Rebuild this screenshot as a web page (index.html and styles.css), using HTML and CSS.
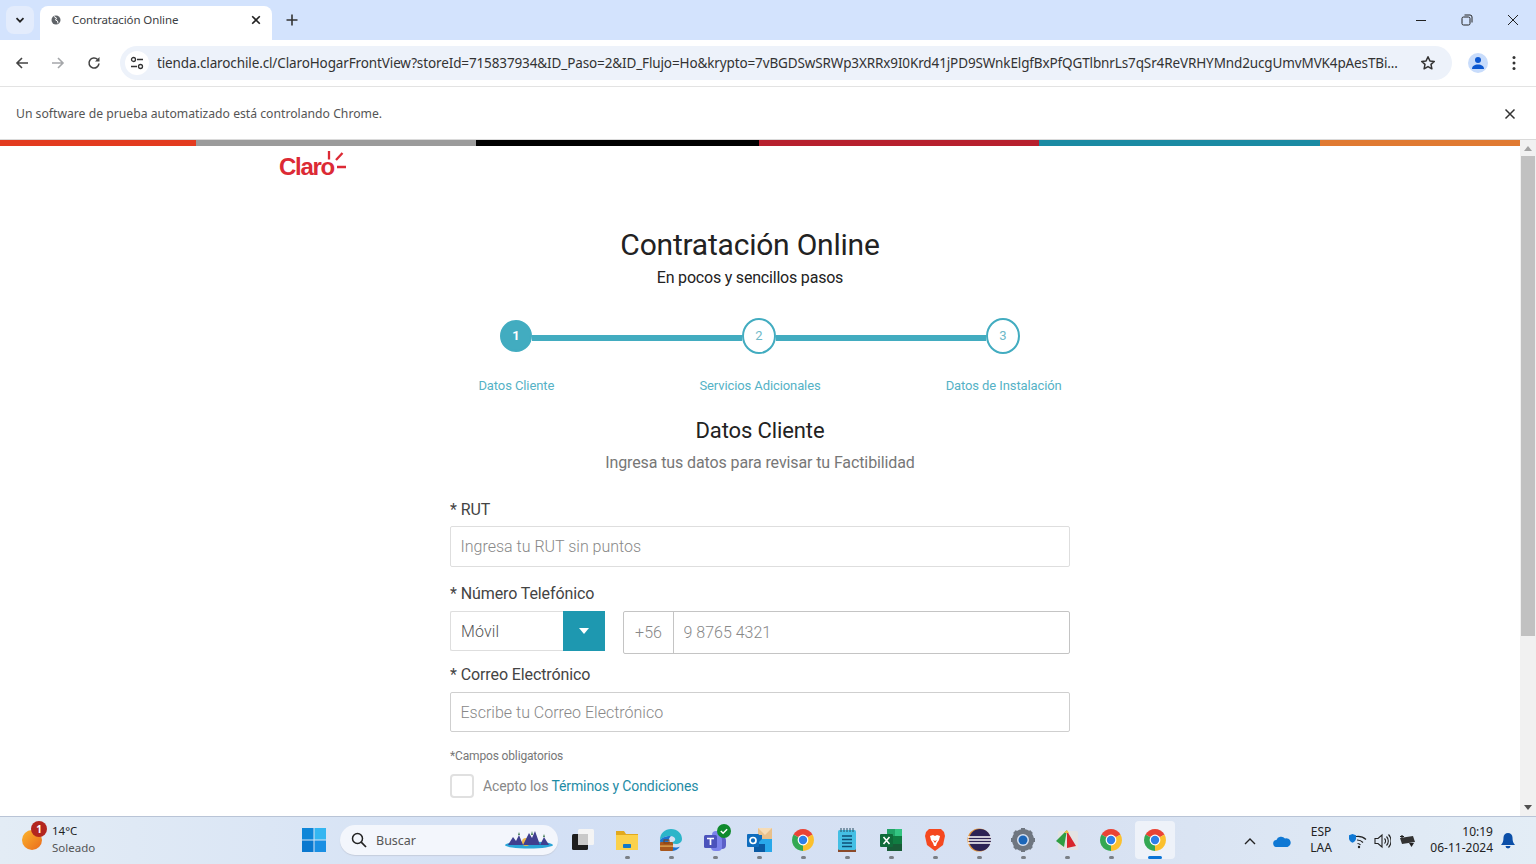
FILE: index.html
```html
<!DOCTYPE html>
<html lang="es">
<head>
<meta charset="utf-8">
<title>Contratación Online</title>
<link rel="stylesheet" href="styles.css">
</head>
<body>
<svg class="defs" width="0" height="0" aria-hidden="true">
  <symbol id="chrome" viewBox="0 0 24 24">
    <path fill="#ea4335" d="M12 12L21.5 6.5A11 11 0 0 0 2.5 6.5Z"/>
    <path fill="#fbc02d" d="M12 12L12 23A11 11 0 0 0 21.5 6.5Z"/>
    <path fill="#34a853" d="M12 12L2.5 6.5A11 11 0 0 0 12 23Z"/>
    <circle cx="12" cy="12" r="5.4" fill="#fff"/>
    <circle cx="12" cy="12" r="4.2" fill="#2f7fe8"/>
  </symbol>
</svg>

<header class="tabstrip">
  <div class="tab-search">
    <svg width="12" height="12" viewBox="0 0 12 12"><path d="M2.5 4.2L6 7.7l3.5-3.5" fill="none" stroke="#222" stroke-width="1.7"/></svg>
  </div>
  <div class="tab">
    <svg class="tab-favicon" width="10" height="10" viewBox="0 0 10 10"><circle cx="5" cy="5" r="4.5" fill="#5f6368"/><path d="M3 1.5l2.5 1.5-1 2 2 1 .5 2.5" fill="none" stroke="#fff" stroke-width="1"/></svg>
    <span class="tab-title">Contratación Online</span>
    <svg width="10" height="10" viewBox="0 0 10 10"><path d="M1.2 1.2l7.6 7.6M8.8 1.2L1.2 8.8" stroke="#222" stroke-width="1.6"/></svg>
  </div>
  <svg class="new-tab" width="12" height="12" viewBox="0 0 12 12"><path d="M6 .5v11M.5 6h11" stroke="#333" stroke-width="1.6"/></svg>
  <div class="win-controls">
    <svg width="12" height="12" viewBox="0 0 12 12"><path d="M1 6.5h10" stroke="#222" stroke-width="1"/></svg>
    <svg width="12" height="12" viewBox="0 0 12 12"><rect x="1" y="3" width="8" height="8" rx="1.5" fill="none" stroke="#222"/><path d="M3.5 1h5.5A2 2 0 0 1 11 3v5.5" fill="none" stroke="#222"/></svg>
    <svg width="12" height="12" viewBox="0 0 12 12"><path d="M1 1l10 10M11 1L1 11" stroke="#222" stroke-width="1"/></svg>
  </div>
</header>

<nav class="toolbar">
  <svg class="nav-icon" width="14" height="14" viewBox="0 0 14 14"><path d="M13 7H2M7 2L2 7l5 5" fill="none" stroke="#444" stroke-width="1.6"/></svg>
  <svg class="nav-icon" width="14" height="14" viewBox="0 0 14 14"><path d="M1 7h11M7 2l5 5-5 5" fill="none" stroke="#a5a7aa" stroke-width="1.6"/></svg>
  <svg class="nav-icon" width="14" height="14" viewBox="0 0 14 14"><path d="M12 7.5A5 5 0 1 1 10.6 3.5" fill="none" stroke="#444" stroke-width="1.6"/><path d="M12.5 1v4.5H8z" fill="#444"/></svg>
  <div class="omnibox">
    <div class="site-info">
      <svg width="14" height="14" viewBox="0 0 14 14"><circle cx="3.5" cy="3.5" r="2" fill="none" stroke="#333" stroke-width="1.3"/><path d="M7 3.5h6M1 10.5h6" stroke="#333" stroke-width="1.3"/><circle cx="10.5" cy="10.5" r="2" fill="none" stroke="#333" stroke-width="1.3"/></svg>
    </div>
    <span class="url">tienda.clarochile.cl/ClaroHogarFrontView?storeId=715837934&amp;ID_Paso=2&amp;ID_Flujo=Ho&amp;krypto=7vBGDSwSRWp3XRRx9I0Krd41jPD9SWnkElgfBxPfQGTlbnrLs7qSr4ReVRHYMnd2ucgUmvMVK4pAesTBi...</span>
    <svg class="star" width="16" height="16" viewBox="0 0 16 16"><path d="M8 1.8l1.9 4.1 4.4.5-3.3 3 .9 4.4L8 11.6l-3.9 2.2.9-4.4-3.3-3 4.4-.5z" fill="none" stroke="#333" stroke-width="1.5" stroke-linejoin="round"/></svg>
  </div>
  <div class="avatar">
    <svg width="14" height="14" viewBox="0 0 14 14"><circle cx="7" cy="4" r="3" fill="#0b57d0"/><path d="M1 13c0-3 2.5-4.5 6-4.5s6 1.5 6 4.5z" fill="#0b57d0"/></svg>
  </div>
  <svg class="kebab" width="4" height="16" viewBox="0 0 4 16"><circle cx="2" cy="2.5" r="1.5" fill="#333"/><circle cx="2" cy="8" r="1.5" fill="#333"/><circle cx="2" cy="13.5" r="1.5" fill="#333"/></svg>
</nav>

<div class="infobar">
  <span>Un software de prueba automatizado está controlando Chrome.</span>
  <svg width="12" height="12" viewBox="0 0 12 12"><path d="M1.5 1.5l9 9M10.5 1.5l-9 9" stroke="#333" stroke-width="1.5"/></svg>
</div>

<div class="viewport">
  <main class="page">
    <div class="color-bar"><i class="c1"></i><i class="c2"></i><i class="c3"></i><i class="c4"></i><i class="c5"></i><i class="c6"></i></div>
    <div class="logo-row">
      <svg class="logo" width="68" height="34" viewBox="0 0 68 34">
        <text x="0" y="25" class="logo-text">Claro</text>
        <path d="M50 1v8.5M57 10l6.5-7M58 17h9" stroke="#dc2a35" stroke-width="2.3" fill="none"/>
      </svg>
    </div>
    <section class="hero">
      <h1>Contratación Online</h1>
      <p>En pocos y sencillos pasos</p>
    </section>
    <div class="steps">
      <span class="step step-on">1</span><span class="connector"></span>
      <span class="step">2</span><span class="connector"></span>
      <span class="step">3</span>
    </div>
    <div class="step-labels">
      <span>Datos Cliente</span><span>Servicios Adicionales</span><span>Datos de Instalación</span>
    </div>
    <form class="form">
      <h2>Datos Cliente</h2>
      <p class="lead">Ingresa tus datos para revisar tu Factibilidad</p>
      <label class="label label-rut">* RUT</label>
      <input class="field field-rut" placeholder="Ingresa tu RUT sin puntos">
      <label class="label label-tel">* Número Telefónico</label>
      <div class="tel-row">
        <div class="select">
          <span class="select-value">Móvil</span>
          <span class="select-btn"><svg width="10" height="6" viewBox="0 0 10 6"><path d="M0 0h10L5 6z" fill="#fff"/></svg></span>
        </div>
        <div class="tel-group">
          <span class="prefix">+56</span>
          <input class="tel-input" placeholder="9 8765 4321">
        </div>
      </div>
      <label class="label label-mail">* Correo Electrónico</label>
      <input class="field field-mail" placeholder="Escribe tu Correo Electrónico">
      <p class="note">*Campos obligatorios</p>
      <div class="terms">
        <span class="checkbox"></span>
        <span>Acepto los <a class="terms-link">Términos y Condiciones</a></span>
      </div>
    </form>
  </main>
  <aside class="scrollbar">
    <svg width="8" height="5" viewBox="0 0 8 5"><path d="M0 5L4 0l4 5z" fill="#a3a3a3"/></svg>
    <div class="thumb"></div>
    <svg class="arrow-down" width="8" height="5" viewBox="0 0 8 5"><path d="M0 0l4 5 4-5z" fill="#505050"/></svg>
  </aside>
</div>

<footer class="taskbar">
  <div class="weather">
    <div class="sun"><span class="sun-badge">1</span></div>
    <div class="weather-text"><span>14°C</span><span class="muted">Soleado</span></div>
  </div>
  <div class="slot">
    <svg class="icon" viewBox="0 0 24 24"><path fill="#0f86d8" d="M0 0h11.5v11.5H0z"/><path fill="#34b6f1" d="M12.5 0H24v11.5H12.5z"/><path fill="#0a78cf" d="M0 12.5h11.5V24H0z"/><path fill="#1a8fe3" d="M12.5 12.5H24V24H12.5z"/></svg>
  </div>
  <div class="search">
    <svg width="16" height="16" viewBox="0 0 16 16"><circle cx="6.5" cy="6.5" r="5" fill="none" stroke="#222" stroke-width="1.5"/><path d="M10.2 10.2L15 15" stroke="#222" stroke-width="1.7"/></svg>
    <span class="search-text">Buscar</span>
    <svg class="search-art" width="48" height="22" viewBox="0 0 48 22">
      <ellipse cx="24" cy="16" rx="24" ry="3.5" fill="#2aa5d8"/>
      <circle cx="21" cy="13" r="4" fill="#f0b84a"/>
      <path d="M3 16l5-8 3 4 3-6 4 10zM18 16l6-12 3 5 3-7 5 14zM35 16l4-8 5 8z" fill="#3f3f8f"/>
      <path d="M13 6l1-3 1 3zM26 6l1-4 1 4zM38 8l1-3 1 3z" fill="#3d7a4e"/>
    </svg>
  </div>
  <div class="slot">
    <svg class="icon" viewBox="0 0 24 24"><rect x="1" y="6" width="16" height="16" rx="1.5" fill="#1d1d1d"/><rect x="7" y="1" width="16" height="16" rx="1.5" fill="#f4f4f4"/><rect x="7" y="6" width="10" height="11" fill="#c9c9c9"/></svg>
  </div>
  <div class="slot">
    <svg class="icon" viewBox="0 0 24 24"><path fill="#e2a91d" d="M1 3h8l2 3h12v3H1z"/><path fill="#fbd14b" d="M1 7h22v15H1z"/><rect x="8" y="16" width="8" height="4" rx=".8" fill="#0f78c9"/></svg>
    <span class="dot"></span>
  </div>
  <div class="slot">
    <svg class="icon" viewBox="0 0 24 24"><path fill="#2cb5c9" d="M1 12C1 5 6 1 12 1c6.5 0 11 4.5 11 10 0 3.5-3 5-6 5-3 0-4-1-4.5-2 5 .5 5.5-6-1.5-6C6 8 3 10 1 12z"/><path fill="#1b73d1" d="M1 12c0 7 5 11 11 11 4 0 7-1.5 9-4.5-3 1.5-9 1.5-11-2C8.5 13 10 10 12 8 6 8 3 10 1 12z"/><rect x="1" y="14" width="13" height="9" rx="1.2" fill="#a8571d"/><rect x="5" y="12" width="5" height="3" fill="none" stroke="#7c3f14"/><rect x="1" y="17.5" width="13" height="1.2" fill="#e8b15a"/></svg>
    <span class="dot"></span>
  </div>
  <div class="slot">
    <svg class="icon" viewBox="0 0 24 24"><circle cx="19" cy="11" r="3.5" fill="#7b83eb"/><rect x="14" y="9" width="9" height="12" rx="4" fill="#5b5fc7"/><circle cx="13" cy="7" r="4" fill="#7b83eb"/><rect x="8" y="8" width="11" height="15" rx="4" fill="#7b83eb"/><rect x="1" y="7" width="13" height="13" rx="1.5" fill="#4b53bc"/><path d="M4 10.5h7M7.5 10.5V17" stroke="#fff" stroke-width="1.7"/><circle cx="21" cy="3" r="7" fill="#0f8a2d"/><path d="M17.8 3l2.3 2.3 4-4" fill="none" stroke="#fff" stroke-width="1.5"/></svg>
    <span class="dot"></span>
  </div>
  <div class="slot">
    <svg class="icon" viewBox="0 0 24 24"><path fill="#e9c08a" d="M11 0h14v11H11z"/><path fill="#f6dcb6" d="M11 0l7 7 7-7z"/><path fill="#0f6cbd" d="M7 7h8v8H7z"/><path fill="#28a8ea" d="M15 11h10v13H12l-5-5z"/><path fill="#0a5aa3" d="M7 16h11v8H7z"/><rect x="0" y="6" width="12" height="13" rx="1" fill="#0f6cbd"/><circle cx="6" cy="12.5" r="3" fill="none" stroke="#fff" stroke-width="1.7"/></svg>
    <span class="dot"></span>
  </div>
  <div class="slot"><svg class="icon"><use href="#chrome"/></svg><span class="dot"></span></div>
  <div class="slot">
    <svg class="icon" viewBox="0 0 24 24"><path fill="#8a4a2a" d="M3 21h18v3H3z"/><rect x="3" y="2" width="18" height="20" rx="1.5" fill="#44bfe4"/><path d="M6 0v4M9 0v4M12 0v4M15 0v4M18 0v4" stroke="#264f63" stroke-width="1"/><path d="M7 8h10M7 11.5h10M7 15h10M7 18.5h10" stroke="#0d4f75" stroke-width="1.4"/></svg>
    <span class="dot"></span>
  </div>
  <div class="slot">
    <svg class="icon" viewBox="0 0 24 24"><path fill="#21a366" d="M8 1h15v7H8z"/><path fill="#107c41" d="M8 8h15v8H8z"/><path fill="#33c481" d="M16 1h7v7h-7z"/><path fill="#185c37" d="M8 16h15v7H8z"/><rect x="1" y="6" width="13" height="13" rx="1" fill="#0f6b3a"/><path d="M4.5 9l6 7M10.5 9l-6 7" stroke="#fff" stroke-width="1.6"/></svg>
    <span class="dot"></span>
  </div>
  <div class="slot">
    <svg class="icon" viewBox="0 0 24 24"><path fill="#f5481f" d="M6 1h12l3 3 1 4-2 9-8 6-8-6-2-9 1-4z"/><path fill="#fff" d="M7 8l3-1 2 1 2-1 3 1-1 4-2 3-1 3h-2l-1-3-2-3z"/><path fill="#f5481f" d="M10 12l2 1 2-1-2 3z"/></svg>
    <span class="dot"></span>
  </div>
  <div class="slot">
    <svg class="icon" viewBox="0 0 24 24"><circle cx="12" cy="12" r="11.5" fill="#e0913a"/><circle cx="13" cy="12" r="11" fill="#2c2255"/><path d="M1 9h23M1 12h23M1 15h23" stroke="#fff" stroke-width="1.3"/></svg>
    <span class="dot"></span>
  </div>
  <div class="slot">
    <svg class="icon" viewBox="0 0 24 24"><circle cx="12" cy="12" r="8.5" fill="none" stroke="#6f7680" stroke-width="5"/><path d="M12 0v5M12 19v5M0 12h5M19 12h5M3.5 3.5L7 7M17 17l3.5 3.5M20.5 3.5L17 7M7 17l-3.500 3.500" stroke="#6f7680" stroke-width="4"/><circle cx="12" cy="12" r="4.5" fill="#1c66b8"/></svg>
    <span class="dot"></span>
  </div>
  <div class="slot">
    <svg class="icon" viewBox="0 0 24 24"><rect x="3" y="3" width="20" height="19" rx="1.5" fill="#e3e3e3"/><path fill="#d8262c" d="M12 3l9 15-9 2z"/><path fill="#2f9e41" d="M12 2L1 13l8 6z"/><path fill="#f0c244" d="M9 5l3-3 2 3z"/></svg>
    <span class="dot"></span>
  </div>
  <div class="slot"><svg class="icon"><use href="#chrome"/></svg><span class="dot"></span></div>
  <div class="slot slot-active"><svg class="icon"><use href="#chrome"/></svg><span class="dot dot-active"></span></div>

  <div class="tray">
    <svg class="tray-caret" width="12" height="8" viewBox="0 0 12 8"><path d="M1 7l5-5 5 5" fill="none" stroke="#222" stroke-width="1.4"/></svg>
    <svg class="tray-cloud" width="18" height="12" viewBox="0 0 18 12"><path fill="#0f78d4" d="M4 12a3.5 3.5 0 0 1-.6-7A5 5 0 0 1 12 3.5 4.2 4.2 0 0 1 14.5 12z"/></svg>
    <div class="lang"><span>ESP</span><span>LAA</span></div>
    <svg class="tray-wifi" width="18" height="16" viewBox="0 0 18 16"><path d="M7 3.5a12 12 0 0 1 10 3M8 7a8 8 0 0 1 6 2.5M8.5 10.5a4 4 0 0 1 3 1.5" fill="none" stroke="#222" stroke-width="1.2"/><circle cx="10" cy="14" r="1.2" fill="#222"/><path d="M3.5 1L7 2.2v3c0 2-1.5 3.5-3.5 4.5C1.5 8.7 0 7.2 0 5.2v-3z" fill="#0f78d4"/></svg>
    <svg class="tray-vol" width="17" height="16" viewBox="0 0 17 16"><path d="M1 5.5h3L8 2v12l-4-3.5H1z" fill="none" stroke="#222" stroke-width="1.1"/><path d="M10.5 5.5a3.5 3.500 0 0 1 0 5M12.5 3.5a6.5 6.5 0 0 1 0 9M14.5 1.5a9.5 9.5 0 0 1 0 13" fill="none" stroke="#222" stroke-width="1.1"/></svg>
    <svg class="tray-batt" width="17" height="14" viewBox="0 0 17 14"><path d="M1 4l13-2 2 6-13 2z" fill="#333"/><path d="M3 1v3M1 2.5h4" stroke="#222" stroke-width="1.2"/><path d="M10 9h5l-2.5 4z" fill="#222"/></svg>
    <div class="clock"><span>10:19</span><span>06-11-2024</span></div>
    <svg class="tray-bell" width="14" height="16" viewBox="0 0 14 16"><path fill="#0b4fa8" d="M7 0a4.5 4.5 0 0 1 4.5 4.5c0 4 .8 5.5 2.5 7.5H0c1.700-2 2.500-3.500 2.500-7.500A4.500 4.500 0 0 1 7 0z"/><path fill="#0b4fa8" d="M4.5 13h5a2.500 2.500 0 0 1-5 0z"/></svg>
  </div>
</footer>
</body>
</html>
```

FILE: styles.css
```css
* { box-sizing: border-box; }
html, body { margin: 0; height: 864px; overflow: hidden; }
body { width: 1536px; font-family: Roboto, "Liberation Sans", sans-serif; background: #fff; }
.defs { position: absolute; }

/* browser chrome */
.tabstrip { height: 40px; background: #d3e3fd; display: flex; align-items: flex-end; font-family: "Noto Sans", "Open Sans", sans-serif; }
.tab-search { width: 28px; height: 28px; margin: 0 6px 6px; background: #e3ecfc; border-radius: 8px; display: flex; align-items: center; justify-content: center; }
.tab { width: 232px; height: 34px; background: #fff; border-radius: 8px 8px 0 0; display: flex; align-items: center; padding: 0 11px 6px; }
.tab-favicon { margin-right: 11px; }
.tab-title { flex: 1; font-size: 11.5px; letter-spacing: -.1px; color: #3c4043; line-height: 16px; }
.new-tab { margin: 0 0 14px 14px; }
.win-controls { margin-left: auto; display: flex; gap: 34px; padding: 0 17px 14px 0; }
.toolbar { height: 47px; background: #fff; border-radius: 8px 8px 0 0; border-bottom: 1px solid #e3e3e3; display: flex; align-items: center; padding: 0 0 1px 15px; }
.nav-icon { margin-right: 22px; }
.omnibox { width: 1332px; height: 34px; margin-left: -3px; background: #edf2fa; border-radius: 17px; display: flex; align-items: center; padding-left: 5px; }
.site-info { width: 24px; height: 24px; background: #fff; border-radius: 50%; display: flex; align-items: center; justify-content: center; }
.url { font-family: "Noto Sans", sans-serif; font-size: 13.5px; color: #333; margin-left: 8px; white-space: nowrap; width: 1241px; line-height: 20px; letter-spacing: -.122px; padding-top: 1px; }
.star { margin-left: 22px; }
.avatar { width: 20px; height: 20px; border-radius: 50%; background: #c8dcfb; margin-left: 16px; display: flex; align-items: center; justify-content: center; }
.kebab { margin-left: 24px; }
.infobar { height: 53px; background: #fff; border-bottom: 1px solid #dadada; display: flex; align-items: center; justify-content: space-between; padding: 1px 20px 0 16px; font-family: "Noto Sans", sans-serif; font-size: 12.2px; color: #555; }

/* viewport */
.viewport { height: 676px; display: flex; }
.page { width: 1520px; height: 676px; overflow: hidden; }
.color-bar { height: 6px; display: grid; grid-template-columns: 196fr 280fr 283fr 280fr 281fr 200fr; }
.c1 { background: #e33b1f; } .c2 { background: #9b9b9b; } .c3 { background: #000; }
.c4 { background: #b7202e; } .c5 { background: #1a8aa3; } .c6 { background: #e07a32; }
.logo-row { height: 38px; padding: 4px 0 0 279px; }
.logo { display: block; }
.logo-text { font-family: "Liberation Sans", sans-serif; font-weight: 700; font-size: 24px; fill: #dc2a35; letter-spacing: -1.3px; }
.hero { text-align: center; padding-right: 20px; }
.hero h1 { margin: 41px 0 0; font-size: 30px; line-height: 40px; font-weight: 400; color: #222; letter-spacing: -.22px; }
.hero p { margin: 1px 0 0; font-size: 16px; line-height: 24px; color: #222; letter-spacing: -.2px; }
.steps { margin-top: 28px; height: 36px; display: flex; justify-content: center; align-items: center; }
.step { width: 34px; height: 36px; border-radius: 50%; border: 2px solid #42acc0; background: #fff; color: #6fb9c8; display: flex; align-items: center; justify-content: center; font-size: 13px; padding-bottom: 2px; }
.step-on { width: 32px; height: 32px; background: #42acc0; color: #fff; font-weight: 700; }
.connector { width: 210px; height: 6px; margin-top: 3px; background: #42acc0; }
.step-labels { margin: 23px auto 0; width: 731px; display: grid; grid-template-columns: repeat(3, 1fr); text-align: center; font-size: 13px; line-height: 18px; color: #55b2c6; letter-spacing: -.1px; }
.form { width: 620px; margin: 0 auto; }
.form h2 { margin: 21px 0 0; text-align: center; font-size: 22px; line-height: 30px; font-weight: 400; color: #222; letter-spacing: -.12px; }
.lead { margin: 6px 0 0; text-align: center; font-size: 16px; line-height: 22px; color: #777; letter-spacing: -.11px; }
.label { display: block; font-size: 16px; line-height: 20px; color: #444; letter-spacing: -.1px; }
.label-rut { margin-top: 26px; }
.label-tel { margin-top: 17px; }
.label-mail { margin-top: 11px; }
.field { display: block; width: 620px; border: 1px solid #dedede; border-radius: 2px; padding: 0 10px 0 9.5px; font: 300 16px/20px Roboto, sans-serif; color: #444; outline: 0; background: #fff; margin-top: 6px; }
.field::placeholder, .tel-input::placeholder { color: #888; opacity: 1; }
.field-rut { height: 41px; }
.field-mail { height: 40px; margin-top: 7px; border-color: #cfcfcf; }
.tel-row { display: flex; gap: 18px; margin-top: 7px; height: 43px; align-items: flex-start; }
.select { width: 155px; height: 40px; display: flex; border: 1px solid #dedede; border-right: 0; border-radius: 2px; }
.select-value { flex: 1; padding-left: 10px; font-size: 16px; font-weight: 300; line-height: 39px; color: #555; letter-spacing: .1px; }
.select-btn { width: 42px; margin: -1px 0; background: #1e98b0; display: flex; align-items: center; justify-content: center; }
.tel-group { flex: 1; height: 43px; border: 1px solid #c4c4c4; border-radius: 2px; display: flex; }
.prefix { width: 50px; border-right: 1px solid #c4c4c4; text-align: center; font-size: 16px; font-weight: 300; line-height: 41px; color: #888; }
.tel-input { flex: 1; min-width: 0; border: 0; outline: 0; padding: 0 10px 0 9.5px; font: 300 16px/20px Roboto, sans-serif; background: transparent; }
.note { margin: 16px 0 0; font-size: 12px; line-height: 16px; color: #777; letter-spacing: -.15px; }
.terms { margin-top: 10px; display: flex; align-items: center; gap: 9px; font-size: 14px; line-height: 24px; color: #888; letter-spacing: -.1px; }
.checkbox { width: 24px; height: 24px; border: 2px solid #e0e0e0; border-radius: 4px; }
.terms-link { color: #1e8ca5; }
.scrollbar { width: 16px; background: #f1f1f1; display: flex; flex-direction: column; align-items: center; padding-top: 6px; }
.thumb { width: 14px; height: 480px; margin-top: 5px; background: #c1c1c1; }
.arrow-down { margin-top: auto; margin-bottom: 6px; }

/* taskbar */
.taskbar { height: 48px; border-top: 1px solid #b9c4d6; background: linear-gradient(90deg, #e3ecf5 0%, #d3e0f5 35%, #d7e1f2 70%, #e3edf6 100%); display: flex; align-items: flex-start; padding-top: 4px; font-family: "Noto Sans", sans-serif; color: #222; }
.weather { width: 292px; display: flex; padding: 1px 0 0 22px; }
.sun { width: 20px; height: 20px; margin-top: 8px; border-radius: 50%; background: linear-gradient(135deg, #fbb52c, #ea6a1c); position: relative; }
.sun-badge { position: absolute; left: 9px; top: -9px; width: 16px; height: 16px; border-radius: 50%; background: #b3261e; color: #fff; font-size: 10px; line-height: 16px; text-align: center; font-weight: 700; }
.weather-text { display: flex; flex-direction: column; margin-left: 10px; font-size: 11.5px; line-height: 17px; }
.muted { color: #555; }
.slot { width: 40px; height: 38px; margin: 0 2px; border-radius: 4px; padding-top: 7px; display: flex; flex-direction: column; align-items: center; }
.slot-active { background: #eef2f9; }
.icon { width: 24px; height: 24px; overflow: visible; display: block; flex: none; }
.dot { width: 5px; height: 3px; margin-top: 4px; border-radius: 2px; background: #7a7f86; }
.dot-active { width: 14px; background: #0a74d6; }
.search { width: 218px; height: 30px; margin: 4px 3px 0 4px; background: #f3f6fc; border-radius: 15px; display: flex; align-items: center; padding: 0 5px 0 11px; box-shadow: 0 1px 1px #c6cedd; }
.search-text { margin-left: 9px; font-size: 12.5px; color: #555; flex: 1; }
.tray { margin-left: auto; display: flex; align-items: center; height: 39px; padding-right: 21px; }
.tray-cloud { margin-left: 17px; }
.lang { width: 34px; margin-left: 13px; margin-top: -2px; display: flex; flex-direction: column; align-items: center; font-size: 12px; line-height: 16px; }
.tray-wifi { margin-left: 11px; }
.tray-vol { margin-left: 7px; }
.tray-batt { margin-left: 8px; }
.clock { width: 69px; margin-left: 8px; margin-top: -2px; display: flex; flex-direction: column; align-items: flex-end; font-size: 12px; line-height: 16px; }
.tray-bell { margin-left: 8px; }
```
